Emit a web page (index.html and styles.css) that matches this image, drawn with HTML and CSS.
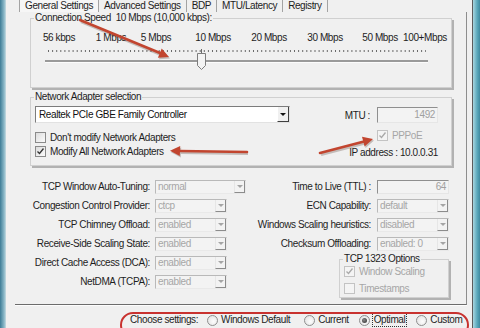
FILE: index.html
```html
<!DOCTYPE html>
<html lang="en">
<head>
    <meta charset="UTF-8">
    <title>TCP Optimizer - General Settings</title>
    <link rel="stylesheet" href="styles.css">
</head>
<body>
    <div class="screen">
        <div class="edge-left"></div>
        <div class="window">
            <div class="tabs">
                <span class="tab active">General Settings</span>
                <span class="tab">Advanced Settings</span>
                <span class="tab">BDP</span>
                <span class="tab">MTU/Latency</span>
                <span class="tab">Registry</span>
            </div>

            <div class="panel">
                <fieldset class="group speed">
                    <legend>Connection Speed&nbsp; 10 Mbps (10,000 kbps):</legend>
                    <div class="scale">
                        <span>56 kbps</span>
                        <span>1 Mbps</span>
                        <span>5 Mbps</span>
                        <span>10 Mbps</span>
                        <span>20 Mbps</span>
                        <span>30 Mbps</span>
                        <span>50 Mbps</span>
                        <span>100+Mbps</span>
                    </div>
                    <svg class="slider" width="420" height="26" viewBox="0 0 420 26">
                        <line x1="17" y1="6" x2="395" y2="6" stroke="#6a6a6a" stroke-width="2" stroke-dasharray="1 3.1"/>
                        <line x1="170.5" y1="4" x2="170.5" y2="9" stroke="#6a6a6a"/>
                        <rect x="14" y="15" width="383" height="2" fill="#9a9a9a"/>
                        <line x1="14" y1="17.5" x2="397" y2="17.5" stroke="#fcfcfc"/>
                        <path d="M166.5 8.5 H174.5 V20.5 L170.5 24.5 L166.5 20.5 Z" fill="#f3f3f3" stroke="#7d7d7d"/>
                    </svg>
                </fieldset>

                <fieldset class="group adapter">
                    <legend>Network Adapter selection</legend>
                    <div class="adapter-body">
                        <div class="adapter-left">
                            <div class="combo wide">
                                <span class="value">Realtek PCIe GBE Family Controller</span>
                                <span class="btn"></span>
                            </div>
                            <label class="check first"><span class="box"></span>Don't modify Network Adapters</label>
                            <label class="check"><span class="box"><svg width="9" height="9" viewBox="0 0 9 9"><path d="M1.5 4.5 L3.5 6.5 L7.5 1.5" fill="none" stroke="#333" stroke-width="1.3"/></svg></span>Modify All Network Adapters</label>
                        </div>
                        <div class="adapter-right">
                            <div class="mtu-row">
                                <span>MTU :</span>
                                <span class="textbox mtu">1492</span>
                            </div>
                            <label class="check pppoe disabled"><span class="box"><svg width="9" height="9" viewBox="0 0 9 9"><path d="M1.5 4.5 L3.5 6.5 L7.5 1.5" fill="none" stroke="#a9a9a9" stroke-width="1.3"/></svg></span>PPPoE</label>
                            <div class="ip">IP address : 10.0.0.31</div>
                        </div>
                    </div>
                </fieldset>

                <div class="tuning">
                    <div class="fields left">
                        <div class="row"><span class="label">TCP Window Auto-Tuning:</span><div class="combo long"><span class="value">normal</span><span class="btn"></span></div></div>
                        <div class="row"><span class="label">Congestion Control Provider:</span><div class="combo"><span class="value">ctcp</span><span class="btn"></span></div></div>
                        <div class="row"><span class="label">TCP Chimney Offload:</span><div class="combo"><span class="value">enabled</span><span class="btn"></span></div></div>
                        <div class="row"><span class="label">Receive-Side Scaling State:</span><div class="combo"><span class="value">enabled</span><span class="btn"></span></div></div>
                        <div class="row"><span class="label">Direct Cache Access (DCA):</span><div class="combo"><span class="value">enabled</span><span class="btn"></span></div></div>
                        <div class="row"><span class="label">NetDMA (TCPA):</span><div class="combo"><span class="value">enabled</span><span class="btn"></span></div></div>
                    </div>
                    <div class="fields right">
                        <div class="row"><span class="label">Time to Live (TTL) :</span><span class="textbox ttl">64</span></div>
                        <div class="row"><span class="label">ECN Capability:</span><div class="combo"><span class="value">default</span><span class="btn"></span></div></div>
                        <div class="row"><span class="label">Windows Scaling heuristics:</span><div class="combo"><span class="value">disabled</span><span class="btn"></span></div></div>
                        <div class="row"><span class="label">Checksum Offloading:</span><div class="combo"><span class="value">enabled: 0</span><span class="btn"></span></div></div>
                        <fieldset class="group mini">
                            <legend>TCP 1323 Options</legend>
                            <label class="check disabled"><span class="box"><svg width="9" height="9" viewBox="0 0 9 9"><path d="M1.5 4.5 L3.5 6.5 L7.5 1.5" fill="none" stroke="#a9a9a9" stroke-width="1.3"/></svg></span>Window Scaling</label>
                            <label class="check disabled second"><span class="box"></span>Timestamps</label>
                        </fieldset>
                    </div>
                </div>
            </div>

            <div class="choose">
                <span class="caption">Choose settings:</span>
                <label class="radio first"><span class="dot"></span>Windows Default</label>
                <label class="radio"><span class="dot"></span>Current</label>
                <label class="radio on"><span class="dot"></span><span class="focus">Optimal</span></label>
                <label class="radio"><span class="dot"></span>Custom</label>
            </div>
        </div>
        <div class="edge-right"></div>
    </div>

    <!-- red annotations drawn over the dialog -->
    <div class="callout"></div>
    <svg class="arrows" width="480" height="328" viewBox="0 0 480 328">
        <g stroke="rgba(60,30,20,0.25)" stroke-width="3" fill="rgba(60,30,20,0.25)" transform="translate(1,1.5)">
            <line x1="80" y1="20" x2="160" y2="53"/>
            <polygon points="169,57 157.9,57.8 161.7,48.6" stroke="none"/>
            <line x1="247" y1="152" x2="180" y2="151"/>
            <polygon points="170,150.7 180.2,146 179.8,156" stroke="none"/>
            <line x1="320" y1="153" x2="364" y2="141.6"/>
            <polygon points="373,139 364.6,146.4 362,136.8" stroke="none"/>
        </g>
        <g stroke="#c2452f" stroke-width="2.6" fill="#c2452f" stroke-linecap="round">
            <line x1="80" y1="20" x2="160" y2="53"/>
            <polygon points="169,57 157.9,57.8 161.7,48.6" stroke="none"/>
            <line x1="247" y1="152" x2="180" y2="151"/>
            <polygon points="170,150.7 180.2,146 179.8,156" stroke="none"/>
            <line x1="320" y1="153" x2="364" y2="141.6"/>
            <polygon points="373,139 364.6,146.4 362,136.8" stroke="none"/>
        </g>
    </svg>
</body>
</html>
```

FILE: styles.css
```css
* {
    box-sizing: border-box;
}

body {
    margin: 0;
    width: 480px;
    height: 328px;
    overflow: hidden;
    position: relative;
    background-color: #f0f0f0;
    font-family: "Liberation Sans", Arial, sans-serif;
    font-size: 10px;
    letter-spacing: -0.4px;
    color: #1e1e1e;
}

.screen {
    display: flex;
    height: 328px;
}

.edge-left {
    flex-shrink: 0;
    width: 6px;
    background: linear-gradient(to right, #3d7c96, #8cb9c9 70%, #c8dce2);
}

.edge-right {
    flex-shrink: 0;
    width: 8px;
    border-left: 1px solid #5c5c5c;
    background: linear-gradient(to right, #a8d6e0, #5aa8bb 60%, #3f8aa0);
}

.window {
    flex: 1;
    min-width: 0;
    display: flex;
    flex-direction: column;
    overflow: hidden;
}

/* tab strip, clipped at the top of the picture */
.tabs {
    display: flex;
    height: 12px;
    padding-left: 13px;
    overflow: hidden;
}

.tab {
    padding: 0 5px;
    line-height: 11px;
    border-right: 1px solid #a3a3a3;
    white-space: nowrap;
}

.tab.active {
    border-left: 1px solid #a3a3a3;
    background-color: #f6f6f6;
}

.panel {
    margin: 0 5px 0 9px;
    height: 293px;
    border-right: 1px solid #8d8d8d;
    border-bottom: 1px solid #6c6c6c;
    box-shadow: 0 1px 0 #fdfdfd;
}

/* group boxes */
.group {
    margin: 0 14px 0 15px;
    padding: 0;
    min-width: 0;
    border: 1px solid #d0d0d0;
    box-shadow: 2px 2px 0 #b2b2b2;
}

.group legend {
    margin-left: 3px;
    padding: 0 1px;
    line-height: 12px;
    white-space: nowrap;
}

.scale {
    display: flex;
    height: 12px;
    line-height: 12px;
    margin-top: 8px;
}

.scale span {
    width: 0;
    display: flex;
    justify-content: center;
    white-space: nowrap;
}

.scale span:nth-child(1) { margin-left: 28px; }
.scale span:nth-child(2) { margin-left: 52px; }
.scale span:nth-child(3) { margin-left: 45px; }
.scale span:nth-child(4) { margin-left: 57px; }
.scale span:nth-child(5) { margin-left: 56px; }
.scale span:nth-child(6) { margin-left: 56px; }
.scale span:nth-child(7) { margin-left: 55px; }
.scale span:nth-child(8) { margin-left: 45px; }

.slider {
    display: block;
    margin: 1px 0 16px;
}

.adapter {
    margin-top: 3px;
}

.adapter-body {
    display: flex;
    justify-content: space-between;
    padding: 0 13px 6px 4px;
}

.adapter-right {
    display: flex;
    flex-direction: column;
    align-items: flex-end;
}

.mtu-row {
    display: flex;
    align-items: center;
    gap: 7px;
    height: 16px;
    margin-top: 4px;
}

.ip {
    height: 12px;
    line-height: 12px;
    margin-top: 6px;
}

/* controls */
.combo {
    display: flex;
    align-items: stretch;
    width: 72px;
    height: 14px;
    background-color: #f3f3f3;
    border: 1px solid;
    border-color: #b9b9b9 #e9e9e9 #e9e9e9 #b9b9b9;
    color: #a6a6a6;
}

.combo .value {
    flex: 1;
    padding-left: 2px;
    line-height: 12px;
    white-space: nowrap;
    overflow: hidden;
}

.combo .btn {
    width: 11px;
    display: flex;
    align-items: center;
    justify-content: center;
    border-left: 1px solid #e6e6e6;
    border-right: 1px solid #8c8c8c;
    border-bottom: 1px solid #8c8c8c;
}

.combo .btn::after {
    content: "";
    border-left: 3px solid transparent;
    border-right: 3px solid transparent;
    border-top: 3px solid #a5a5a5;
}

.combo.wide {
    width: 255px;
    height: 17px;
    margin-top: 3px;
    background-color: #fff;
    border-color: #7c7c7c #e2e2e2 #e2e2e2 #7c7c7c;
    color: #111;
}

.combo.wide .value {
    line-height: 15px;
    padding-left: 3px;
}

.combo.wide .btn {
    width: 12px;
    background-color: #f0f0f0;
    border-left-color: #fff;
    border-right-color: #404040;
    border-bottom-color: #404040;
}

.combo.wide .btn::after {
    border-top-color: #111;
}

.combo.long {
    width: 91px;
}

.textbox {
    display: block;
    height: 14px;
    line-height: 12px;
    padding-right: 2px;
    text-align: right;
    background-color: #f3f3f3;
    border: 1px solid;
    border-color: #8f8f8f #e6e6e6 #e6e6e6 #8f8f8f;
    color: #a0a0a0;
}

.textbox.mtu {
    width: 61px;
    height: 16px;
    line-height: 14px;
}

.textbox.ttl {
    width: 72px;
}

.check {
    display: flex;
    align-items: center;
    gap: 4px;
    height: 14px;
    white-space: nowrap;
}

.check.first {
    margin-top: 7px;
}

.check .box {
    width: 11px;
    height: 11px;
    display: flex;
    align-items: center;
    justify-content: center;
    border: 1px solid #8a8a8a;
    background: linear-gradient(135deg, #dcdcdc, #fbfbfb);
}

.check.disabled {
    color: #a6a6a6;
}

.check.disabled .box {
    border-color: #c3c3c3;
    background: #f4f4f4;
}

.check.pppoe {
    width: 61px;
    height: 12px;
    margin-top: 6px;
}

.tuning {
    display: flex;
    gap: 5px;
    margin: 11px 0 0 15px;
}

.fields {
    display: flex;
    flex-direction: column;
}

.row {
    display: flex;
    align-items: center;
    height: 19px;
}

.row .label {
    width: 125px;
    padding-right: 5px;
    text-align: right;
    white-space: nowrap;
}

.right .row .label {
    width: 126px;
    padding-right: 6px;
}

.group.mini {
    width: 110px;
    margin: 0 0 0 88px;
}

.group.mini .check {
    height: 13px;
    padding-left: 4px;
}

.group.mini .check.second {
    margin: 4px 0 2px;
}

/* bottom bar */
.choose {
    display: flex;
    align-items: center;
    padding: 9px 0 0 124px;
    line-height: 12px;
    white-space: nowrap;
}

.choose .caption {
    margin-right: 9px;
}

.radio {
    display: flex;
    align-items: center;
    gap: 3px;
    margin-right: 10px;
}

.radio.first {
    margin-right: 14px;
}

.radio .dot {
    width: 11px;
    height: 11px;
    border-radius: 50%;
    border: 1px solid #8e8e8e;
    background: radial-gradient(circle at 60% 60%, #fdfdfd, #dedede);
    display: flex;
    align-items: center;
    justify-content: center;
}

.radio.on .dot::after {
    content: "";
    width: 5px;
    height: 5px;
    border-radius: 50%;
    background: radial-gradient(circle at 40% 40%, #8a8a8a, #2a2a2a);
}

.radio .focus {
    outline: 1px dotted #333;
    padding: 0 1px;
}

/* annotations */
.callout {
    position: absolute;
    left: 120px;
    top: 312px;
    width: 349px;
    height: 26px;
    border: 2px solid #c8322f;
    border-radius: 13px;
}

.arrows {
    position: absolute;
    left: 0;
    top: 0;
    pointer-events: none;
}
```
